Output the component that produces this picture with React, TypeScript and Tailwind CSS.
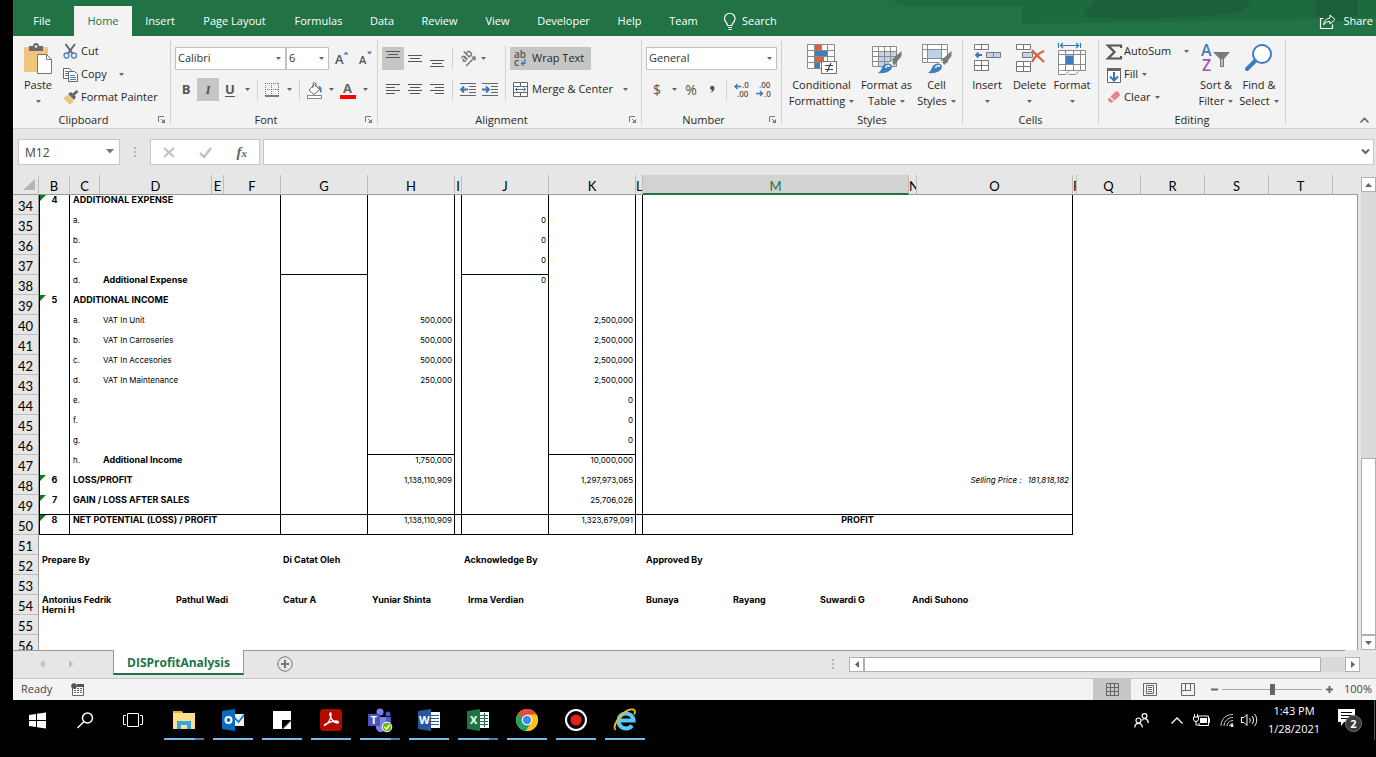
import React from "react";

type Kids = { children?: React.ReactNode };

/* ---------- drawing helpers ---------- */

function Svg({ w, h, children, className = "" }: Kids & { w: number; h: number; className?: string }) {
  return (
    <svg width={w} height={h} viewBox={`0 0 ${w} ${h}`} fill="none" className={`shrink-0 overflow-visible ${className}`} aria-hidden="true">
      {children}
    </svg>
  );
}

const Caret = ({ className = "" }: { className?: string }) => (
  <Svg w={5} h={3} className={className}>
    <path d="M0 0h5L2.500 3z" fill="#666" />
  </Svg>
);

const Launcher = () => (
  <Svg w={8} h={8}>
    <path d="M.5 6V.5H6M3 3l3 3" stroke="#777" />
    <path d="M7 3v4H3z" fill="#777" />
  </Svg>
);

const PasteIcon = () => (
  <Svg w={30} h={32}>
    <rect x="1" y="4" width="24" height="25" rx="1" fill="#eec680" />
    <path d="M6 3h4a3 3 0 0 1 6 0h4v5H6z" fill="#6b6b6b" />
    <circle cx="13" cy="3.500" r="1.300" fill="#f3f3f3" />
    <path d="M14.500 11.500h9l5 5v14h-14z" fill="#fff" stroke="#777" />
    <path d="M23.500 11.500v5h5" stroke="#777" />
  </Svg>
);

const CutIcon = () => (
  <Svg w={15} h={15}>
    <path d="M2.500 0 9.500 9.500M12 0 5 9.500" stroke="#666" strokeWidth="2" />
    <circle cx="3.500" cy="11.500" r="2.500" stroke="#4a80bd" strokeWidth="1.300" />
    <circle cx="11" cy="11.500" r="2.500" stroke="#4a80bd" strokeWidth="1.300" />
  </Svg>
);

const CopyIcon = () => (
  <Svg w={15} h={15}>
    <path d="M.5 1.500h6l2 2v8h-8z" fill="#fff" stroke="#666" />
    <path d="M2 4.500h3M2 6.500h3M2 8.500h3" stroke="#4a80bd" />
    <path d="M5.500 4.500h6l3 3v7h-9z" fill="#fff" stroke="#666" />
    <path d="M7 8.500h5M7 10.500h6M7 12.500h6" stroke="#4a80bd" />
  </Svg>
);

const PainterIcon = () => (
  <Svg w={16} h={15}>
    <path d="M0 8l5-3 6 6-4 4z" fill="#eec680" />
    <path d="M5 4l3-2 5 5-2 3z" fill="#666" />
    <path d="M10 5l4.500-4" stroke="#666" strokeWidth="3" />
  </Svg>
);

function FontSizeIcon({ up }: { up: boolean }) {
  return (
    <Svg w={16} h={18}>
      <text x="0" y="14" fontFamily="Open Sans, sans-serif" fontWeight="600" fontSize={up ? 13 : 11} fill="#555">A</text>
      <path d={up ? "M8.500 4.500h5L11 1.500z" : "M8 1.500h5l-2.500 3z"} fill="#4a80bd" />
    </Svg>
  );
}

const BorderIcon = () => (
  <Svg w={14} h={14}>
    <path d="M.5 0v13M13.500 0v13M6.500 0v13M0 .5h14M0 6.500h14" stroke="#777" strokeDasharray="1 1" />
    <path d="M0 13h14" stroke="#555" strokeWidth="1.500" />
  </Svg>
);

const BucketIcon = () => (
  <Svg w={17} h={18}>
    <path d="M3 9l5.500-5.500 5 5L8 13.500z" fill="#fff" stroke="#666" />
    <path d="M7 7V3a1.500 1.500 0 0 1 3 0v3" stroke="#666" />
    <path d="M12 5c4 0 4 3 3.500 7-2-1-1.500-3-3.500-7z" fill="#4a80bd" />
    <rect x="1.500" y="14.500" width="14" height="3" fill="#fff" stroke="#888" />
  </Svg>
);

const FontColorIcon = () => (
  <Svg w={16} h={18}>
    <text x="3" y="12" fontFamily="Open Sans, sans-serif" fontWeight="700" fontSize="13" fill="#666">A</text>
    <rect y="14" width="16" height="4" fill="#f00" />
  </Svg>
);

/* Horizontal strokes given as [x1, x2, y]. */
function Lines({ rows, w = 14, h = 16 }: { rows: number[][]; w?: number; h?: number }) {
  return (
    <Svg w={w} h={h}>
      <path d={rows.map(([a, b, y]) => `M${a} ${y + 0.5}H${b}`).join("")} stroke="#555" />
    </Svg>
  );
}

const OrientIcon = () => (
  <Svg w={17} h={18}>
    <text x="0" y="0" transform="translate(4 13) rotate(-45)" fontFamily="Open Sans, sans-serif" fontWeight="600" fontSize="11" fill="#666">ab</text>
    <path d="M6 16 15 7M11.500 7H15v3.500" stroke="#666" strokeWidth="1.200" />
  </Svg>
);

function IndentIcon({ right }: { right: boolean }) {
  return (
    <Svg w={17} h={14}>
      <path d="M0 .5h16M9 3.500h7M9 6.500h7M9 9.500h7M0 12.500h16" stroke="#666" />
      <path d={right ? "M0 6.500h6M4 3.500l3 3-3 3" : "M1.500 6.500H8M4 3.500l-3 3 3 3"} stroke="#3a74b5" strokeWidth="1.800" />
    </Svg>
  );
}

const WrapIcon = () => (
  <Svg w={14} h={18}>
    <g fontFamily="Open Sans, sans-serif" fontWeight="600" fontSize="10" fill="#555">
      <text x="0" y="8">ab</text>
      <text x="0" y="16">c</text>
    </g>
    <path d="M11 9v4.500H7.500M9.500 11.500l-2 2 2 2" stroke="#3a74b5" strokeWidth="1.200" />
  </Svg>
);

const MergeIcon = () => (
  <Svg w={15} h={15}>
    <path d="M.5.5h14v14H.5zM.5 4.500h14M.5 10.500h14M7.500.5v4M7.500 10.500v4" fill="#fff" stroke="#666" />
    <path d="M2.500 7.500h10M4.500 5.500l-2 2 2 2M10.500 5.500l2 2-2 2" stroke="#3a74b5" />
  </Svg>
);

function DecimalIcon({ more }: { more: boolean }) {
  return (
    <Svg w={15} h={16}>
      <g fontFamily="Open Sans, sans-serif" fontWeight="600" fontSize="8" fill="#555">
        <text x={more ? 8 : 3} y="6">{more ? ".0" : ".00"}</text>
        <text x={more ? 3 : 8} y="15">{more ? ".00" : ".0"}</text>
      </g>
      <path d={more ? "M1 4.500h6M3.500 2 1 4.500 3.500 7" : "M0 11.500h6M4 9l2.500 2.500L4 14"} stroke="#3a74b5" strokeWidth="1.300" />
    </Svg>
  );
}

const ConditionalIcon = () => (
  <Svg w={32} h={32}>
    <path d="M1.500 1.500h27v24h-27z" fill="#fff" />
    <path d="M9 2h6v6H9zM9 14h9v5H9z" fill="#d8623f" />
    <path d="M9 8h12v5H9zM9 20h5v5H9z" fill="#3f7cbd" />
    <path d="M1.500 1.500h27v24h-27zM1.500 7.500h27M1.500 13.500h27M1.500 19.500h27M8.500 1.500v24M15.500 1.500v6M21.500 1.500v24" stroke="#8a8a8a" />
    <rect x="15.500" y="18.500" width="15" height="12" fill="#fff" stroke="#777" />
    <path d="M19 22.500h8M19 26.500h8M25 20l-4 9" stroke="#444" strokeWidth="1.200" />
  </Svg>
);

const Brush = () => (
  <>
    <path d="M29.500 8v5l-7 9-4-4z" fill="#7a7a7a" />
    <path d="M21 17l-4 3 3 3z" fill="#fff" />
    <path d="M20 23c0 5-6 8-14 7 5-3 3-8 8-9 3-1 5 0 6 2z" fill="#3f7cbd" />
    <path d="M13.500 25c1-3 4-3 4-1" stroke="#fff" strokeWidth="1.500" />
  </>
);

const TableIcon = () => (
  <Svg w={30} h={32}>
    <path d="M.5 3.500h24v20H.5z" fill="#fff" />
    <path d="M7 9h18v15H7z" fill="#c3d5ea" />
    <path d="M.5 3.500h24v20H.5zM.5 8.500h24M.5 13.500h24M.5 18.500h24M6.500 3.500v20M12.500 3.500v20M18.500 3.500v20" stroke="#8a8a8a" />
    <Brush />
  </Svg>
);

const CellStylesIcon = () => (
  <Svg w={30} h={32}>
    <path d="M.5 1.500h26v19H.5z" fill="#fff" />
    <path d="M6 7h14v9H6z" fill="#bcd1ea" />
    <path d="M.5 1.500h25v18H.5zM.5 6.500h25M.5 15.500h25M5.500 1.500v18M19.500 1.500v18" stroke="#8a8a8a" />
    <Brush />
  </Svg>
);

const InsertIcon = () => (
  <Svg w={28} h={32}>
    <path d="M1.500 1.500h14v5h-14zM8.500 1.500v5M1.500 17.500h14v10h-14zM8.500 17.500v10M1.500 22.500h14" fill="#fff" stroke="#777" />
    <path d="M13.500 9.500h14v5h-14zM20.500 9.500v5" fill="#c3d5ea" stroke="#777" />
    <path d="M3 12h6M5.500 9.500 3 12l2.500 2.500" stroke="#3a74b5" strokeWidth="1.800" />
  </Svg>
);

const DeleteIcon = () => (
  <Svg w={30} h={32}>
    <path d="M1.500 1.500h14v5h-14zM8.500 1.500v5M1.500 18.500h14v10h-14zM8.500 18.500v10M1.500 23.500h14" fill="#fff" stroke="#777" />
    <path d="M7.500 9.500h10v5h-10z" fill="#c3d5ea" stroke="#777" />
    <path d="M17 7c3 4 8 8 12 12M29 8c-5 2-10 7-12 11" stroke="#d8623f" strokeWidth="2.200" />
  </Svg>
);

const FormatIcon = () => (
  <Svg w={30} h={32}>
    <path d="M1.500 0v5M23.500 0v5M3 2.500h19M6 0 3.500 2.500 6 5M19 0l2.500 2.500L19 5" stroke="#3a74b5" strokeWidth="1.200" />
    <path d="M1.500 7.500h27v20h-27z" fill="#fff" />
    <path d="M8.500 12.500h8v9h-8z" fill="#3f7cbd" />
    <path d="M1.500 7.500h27v20h-27zM1.500 11.500h27M1.500 21.500h27M8.500 7.500v20M16.500 7.500v20M23.500 7.500v20" stroke="#8a8a8a" />
    <path d="M1.500 27.500v4h7l3-3M11.500 31.500h7l3-3" fill="#fff" stroke="#8a8a8a" />
  </Svg>
);

const SigmaIcon = () => (
  <Svg w={16} h={16}>
    <path d="M15 4V1.500H2L8.500 8 2 14.500h13V12" stroke="#555" strokeWidth="2.200" />
  </Svg>
);

const FillIcon = () => (
  <Svg w={16} h={16}>
    <path d="M1.500 1.500h13v14h-13z" fill="#fff" stroke="#666" />
    <path d="M1 1h14v3H1z" fill="#666" />
    <path d="M8 5v8M4 9.500l4 4 4-4" stroke="#3a74b5" strokeWidth="2" />
  </Svg>
);

const EraserIcon = () => (
  <Svg w={16} h={15}>
    <path d="M8.500 2.500 11 1l3 3-.5 2-5 4.500-4-4z" fill="#ec8093" />
    <path d="M3.500 7.500l4 4L5 13 1.500 10z" fill="#ec8093" />
  </Svg>
);

const SortIcon = () => (
  <Svg w={30} h={32}>
    <g fontFamily="Open Sans, sans-serif" fontWeight="600" fontSize="16">
      <text x="0" y="13" fill="#3f7cbd">A</text>
      <text x="1" y="28" fill="#9a55b5">Z</text>
    </g>
    <path d="M12 9h17l-6 7v8h-4v-8z" fill="#7a7a7a" />
    <path d="M20.500 16h1v7h-1z" fill="#fff" />
  </Svg>
);

const FindIcon = () => (
  <Svg w={28} h={32}>
    <circle cx="17" cy="11" r="9" fill="#fff" stroke="#3f7cbd" strokeWidth="2" />
    <path d="M10 18 2 26" stroke="#3f7cbd" strokeWidth="4" strokeLinecap="round" />
  </Svg>
);

/* ---------- ribbon ---------- */

const tabs: [string, string][] = [
  ["File", "w-[58px] mr-[3px]"],
  ["Home", "w-[58px]"],
  ["Insert", "w-[56px]"],
  ["Page Layout", "w-[93px]"],
  ["Formulas", "w-[75px]"],
  ["Data", "w-[52px]"],
  ["Review", "w-[63px]"],
  ["View", "w-[53px]"],
  ["Developer", "w-[79px]"],
  ["Help", "w-[53px]"],
  ["Team", "w-[55px]"],
];

function TabBar() {
  return (
    <header className="relative flex h-9 shrink-0 items-end overflow-hidden bg-[#217346] text-white">
      <svg className="absolute top-0 right-0" width="486" height="36" viewBox="0 0 486 36" aria-hidden="true">
        <path d="M0 0h486v6H16z" fill="#1e6a40" />
        <path d="M132 6h354v12L132 24z" fill="#1e6a40" />
        <path d="M205 0c-2 8-16 12-8 17 40 4 90 0 132-2 20-1 30-6 32-15z" fill="#1b603a" />
        <path d="M428 0c-8 8-2 16 6 19 14 4 24 2 34-4V0z" fill="#1b603a" />
      </svg>
      <nav className="relative flex h-[30px]">
        {tabs.map(([name, width]) => (
          <button key={name} className={`h-full ${width} ${name === "Home" ? "bg-[#f3f3f3] text-[#217346]" : ""}`}>
            {name}
          </button>
        ))}
      </nav>
      <button className="relative ml-3 flex h-[30px] items-center gap-[5px]">
        <Svg w={14} h={17}>
          <path d="M4.500 12.500c0-3-3-3.500-3-7a5.200 5.200 0 0 1 10.500 0c0 3.500-3 4-3 7zM5 14.500h4M5.500 16.500h3" stroke="#fff" strokeWidth="1.200" />
        </Svg>
        Search
      </button>
      <button className="relative mr-[3px] ml-auto flex h-[30px] items-center gap-[7px]">
        <Svg w={16} h={15}>
          <path d="M3.500 4.500h-3v10h12v-4" stroke="#fff" strokeWidth="1.200" />
          <path d="M10 1l5 4.500L10 10V7.500C7 7.500 5 8.500 3.500 11c.5-4 2.500-6.500 6.500-7z" stroke="#fff" />
        </Svg>
        Share
      </button>
    </header>
  );
}

function Group({ label, width, launcher, children }: Kids & { label: string; width: string; launcher?: boolean }) {
  return (
    <section className={`flex h-[84px] shrink-0 flex-col border-r border-[#d0d0d0] ${width}`}>
      <div className="flex h-[72px] shrink-0">{children}</div>
      <div className="flex h-4 shrink-0 items-center text-center">
        <h2 className="flex-1">{label}</h2>
        {launcher && (
          <button aria-label={`${label} settings`} className="flex w-4 justify-end pr-1">
            <Launcher />
          </button>
        )}
      </div>
    </section>
  );
}

function BigButton({ icon, lines, width }: { icon: React.ReactNode; lines: string[]; width: string }) {
  return (
    <button className={`flex shrink-0 flex-col items-center pt-[3px] leading-4 whitespace-nowrap ${width}`}>
      <span className="mb-[2px]">{icon}</span>
      <span>{lines[0]}</span>
      <span className="flex h-4 items-center gap-1">
        {lines[1]}
        <Caret />
      </span>
    </button>
  );
}

function SmallButton({ icon, label, caret = "" }: { icon: React.ReactNode; label: string; caret?: string }) {
  return (
    <button className="flex h-[23px] items-center whitespace-nowrap">
      <span className="flex w-[18px]">{icon}</span>
      {label}
      {caret && <Caret className={caret} />}
    </button>
  );
}

function Tool({ label, width = "w-[22px]", active, children }: Kids & { label: string; width?: string; active?: boolean }) {
  return (
    <button aria-label={label} className={`flex h-[23px] shrink-0 items-center justify-center ${width} ${active ? "bg-[#c6c6c6]" : ""}`}>
      {children}
    </button>
  );
}

const Bar = () => <span className="h-[21px] w-px shrink-0 bg-[#d0d0d0]" />;

function Picker({ label, value, width }: { label: string; value: string; width: string }) {
  return (
    <label className={`relative block h-[23px] ${width}`}>
      <select aria-label={label} className="h-full w-full appearance-none border border-[#c0c0c0] bg-white pl-[2px] text-[#333]">
        <option>{value}</option>
      </select>
      <Caret className="pointer-events-none absolute top-[10px] right-[5px]" />
    </label>
  );
}

function Ribbon() {
  return (
    <div className="flex h-[93px] shrink-0 border-b border-[#d0d0d0] bg-[#f3f3f3] pt-1">
      <Group label="Clipboard" width="w-[158px]" launcher>
        <BigButton icon={<PasteIcon />} lines={["Paste"]} width="w-[50px]" />
        <div className="flex flex-col">
          <SmallButton icon={<CutIcon />} label="Cut" />
          <SmallButton icon={<CopyIcon />} label="Copy" caret="ml-3" />
          <SmallButton icon={<PainterIcon />} label="Format Painter" />
        </div>
      </Group>

      <Group label="Font" width="w-[207px]" launcher>
        <div className="flex flex-col gap-2 pt-[7px] pl-1">
          <div className="flex">
            <Picker label="Font name" value="Calibri" width="w-[111px]" />
            <Picker label="Font size" value="6" width="w-[43px]" />
            <Tool label="Increase font size" width="w-[28px]"><FontSizeIcon up /></Tool>
            <Tool label="Decrease font size" width="w-5"><FontSizeIcon up={false} /></Tool>
          </div>
          <div className="flex items-center text-[13px] font-bold text-[#555]">
            <Tool label="Bold">B</Tool>
            <Tool label="Italic" active><span className="font-['Liberation_Serif',serif] italic">I</span></Tool>
            <Tool label="Underline"><span className="border-b border-[#555] leading-[13px]">U</span></Tool>
            <Tool label="Underline options" width="w-3"><Caret /></Tool>
            <span className="w-1" />
            <Bar />
            <span className="w-[3px]" />
            <Tool label="Borders"><BorderIcon /></Tool>
            <Tool label="Border options" width="w-3"><Caret /></Tool>
            <span className="w-1" />
            <Bar />
            <span className="w-[3px]" />
            <Tool label="Fill color"><BucketIcon /></Tool>
            <Tool label="Fill color options" width="w-3"><Caret /></Tool>
            <Tool label="Font color"><FontColorIcon /></Tool>
            <Tool label="Font color options" width="w-3"><Caret /></Tool>
          </div>
        </div>
      </Group>

      <Group label="Alignment" width="w-[264px]" launcher>
        <div className="flex flex-col gap-2 pt-[7px] pl-1">
          <div className="flex items-center">
            <Tool label="Top align" active><Lines rows={[[0, 14, 0], [2, 12, 3], [0, 14, 6]]} /></Tool>
            <Tool label="Middle align"><Lines rows={[[0, 14, 4], [2, 12, 7], [0, 14, 10]]} /></Tool>
            <Tool label="Bottom align"><Lines rows={[[0, 14, 9], [2, 12, 12], [0, 14, 15]]} /></Tool>
            <span className="w-1" />
            <Bar />
            <span className="w-1" />
            <Tool label="Orientation"><OrientIcon /></Tool>
            <Tool label="Orientation options" width="w-2"><Caret /></Tool>
          </div>
          <div className="flex items-center">
            <Tool label="Align left"><Lines h={11} rows={[[0, 14, 0], [0, 9, 3], [0, 14, 6], [0, 9, 9]]} /></Tool>
            <Tool label="Align center"><Lines h={11} rows={[[0, 14, 0], [2, 12, 3], [0, 14, 6], [2, 12, 9]]} /></Tool>
            <Tool label="Align right"><Lines h={11} rows={[[0, 14, 0], [5, 14, 3], [0, 14, 6], [5, 14, 9]]} /></Tool>
            <span className="w-1" />
            <Bar />
            <span className="w-1" />
            <Tool label="Decrease indent"><IndentIcon right={false} /></Tool>
            <Tool label="Increase indent"><IndentIcon right /></Tool>
          </div>
        </div>
        <span className="mt-[6px] ml-1 h-[54px] w-px bg-[#d0d0d0]" />
        <div className="flex flex-col gap-2 pt-[7px] pl-1">
          <button className="flex h-[23px] w-[81px] items-center gap-1 bg-[#c6c6c6] pl-1 whitespace-nowrap">
            <WrapIcon />
            Wrap Text
          </button>
          <button className="flex h-[23px] items-center gap-1 pl-[3px] whitespace-nowrap">
            <MergeIcon />
            Merge &amp; Center
            <Caret className="ml-[6px]" />
          </button>
        </div>
      </Group>

      <Group label="Number" width="w-[140px]" launcher>
        <div className="flex flex-col gap-2 pt-[7px] pl-1">
          <Picker label="Number format" value="General" width="w-[131px]" />
          <div className="flex items-center text-[14px] text-[#555]">
            <Tool label="Currency">$</Tool>
            <Tool label="Currency options" width="w-3"><Caret /></Tool>
            <Tool label="Percent">%</Tool>
            <Tool label="Comma style" width="w-5">
              <Svg w={5} h={8}><path d="M0 2a2 2 0 0 1 4.500 0c0 2-1.500 4-4 5C1.500 6 2 5 2 4 1 4 0 3 0 2z" fill="#555" /></Svg>
            </Tool>
            <span className="w-1" />
            <Bar />
            <span className="w-[3px]" />
            <Tool label="Increase decimal"><DecimalIcon more /></Tool>
            <Tool label="Decrease decimal"><DecimalIcon more={false} /></Tool>
          </div>
        </div>
      </Group>

      <Group label="Styles" width="w-[181px]">
        <span className="w-[3px]" />
        <BigButton icon={<ConditionalIcon />} lines={["Conditional", "Formatting"]} width="w-[73px]" />
        <BigButton icon={<TableIcon />} lines={["Format as", "Table"]} width="w-[57px]" />
        <BigButton icon={<CellStylesIcon />} lines={["Cell", "Styles"]} width="w-[43px]" />
      </Group>

      <Group label="Cells" width="w-[136px]">
        <span className="w-[3px]" />
        <BigButton icon={<InsertIcon />} lines={["Insert"]} width="w-[42px]" />
        <BigButton icon={<DeleteIcon />} lines={["Delete"]} width="w-[43px]" />
        <BigButton icon={<FormatIcon />} lines={["Format"]} width="w-[42px]" />
      </Group>

      <Group label="Editing" width="w-[187px]">
        <div className="flex w-[96px] flex-col pl-[7px]">
          <SmallButton icon={<SigmaIcon />} label="AutoSum" caret="ml-[13px]" />
          <SmallButton icon={<FillIcon />} label="Fill" caret="ml-1" />
          <SmallButton icon={<EraserIcon />} label="Clear" caret="ml-1" />
        </div>
        <BigButton icon={<SortIcon />} lines={["Sort &", "Filter"]} width="w-[42px]" />
        <BigButton icon={<FindIcon />} lines={["Find &", "Select"]} width="w-[44px]" />
      </Group>

      <button aria-label="Collapse ribbon" className="mt-auto mr-[7px] mb-[5px] ml-auto">
        <Svg w={9} h={6}><path d="M.5 5.500l4-4 4 4" stroke="#666" strokeWidth="1.600" /></Svg>
      </button>
    </div>
  );
}

/* ---------- formula bar ---------- */

const Dots = () => (
  <Svg w={2} h={11}>
    <path d="M0 0h2v2H0zM0 4h2v2H0zM0 8h2v2H0z" fill="#b0b0b0" />
  </Svg>
);

function FormulaBar() {
  return (
    <div className="flex h-[46px] shrink-0 items-start pt-[10px] pr-[2px] pl-[5px]">
      <label className="relative flex w-[102px]">
        <input aria-label="Name box" defaultValue="M12" className="h-[26px] w-full border border-[#c6c6c6] bg-white pl-[6px] text-xs text-[#444]" />
        <Svg w={8} h={5} className="absolute top-[10px] right-[6px]"><path d="M0 0h8L4 4.500z" fill="#777" /></Svg>
      </label>
      <span className="flex h-[26px] w-[30px] items-center justify-center"><Dots /></span>
      <div className="flex h-[26px] w-[110px] items-center justify-around border border-[#c6c6c6] bg-white">
        <button aria-label="Cancel"><Svg w={12} h={11}><path d="M1 1l10 9M11 1L1 10" stroke="#c0c0c0" strokeWidth="2" /></Svg></button>
        <button aria-label="Enter"><Svg w={13} h={11}><path d="M1 6l4 4 7-9" stroke="#c0c0c0" strokeWidth="2.400" /></Svg></button>
        <button className="font-['Liberation_Serif',serif] text-[15px] font-bold text-[#666] italic">f<span className="text-[11px]">x</span></button>
      </div>
      <label className="relative ml-[3px] flex flex-1">
        <input aria-label="Formula" className="h-[26px] w-full border border-[#c6c6c6] bg-white px-2" />
        <Svg w={9} h={6} className="absolute top-[10px] right-1"><path d="M1 .5l3.500 3.500L8 .5" stroke="#666" strokeWidth="2" /></Svg>
      </label>
    </div>
  );
}

/* ---------- worksheet ---------- */

const columns: [string, string][] = [
  ["B", "w-[31px]"], ["C", "w-[30px]"], ["D", "w-[112px]"], ["E", "w-[12px]"], ["F", "w-[57px]"],
  ["G", "w-[87px]"], ["H", "w-[87px]"], ["I", "w-[7px]"], ["J", "w-[87px]"], ["K", "w-[87px]"],
  ["L", "w-[7px]"], ["M", "w-[266px]"], ["N", "w-[8px]"], ["O", "w-[156px]"], ["P", "w-[4px]"],
  ["Q", "w-[64px]"], ["R", "w-[64px]"], ["S", "w-[64px]"], ["T", "w-[64px]"],
];

type Row = { n: number; b?: string; c?: string; title?: string; d?: string; bold?: boolean; h?: string; j?: string; k?: string; m?: string; note?: string };

const rows: Row[] = [
  { n: 34, b: "4", title: "ADDITIONAL EXPENSE" },
  { n: 35, c: "a.", j: "0" },
  { n: 36, c: "b.", j: "0" },
  { n: 37, c: "c.", j: "0" },
  { n: 38, c: "d.", d: "Additional Expense", bold: true, j: "0" },
  { n: 39, b: "5", title: "ADDITIONAL INCOME" },
  { n: 40, c: "a.", d: "VAT In Unit", h: "500,000", k: "2,500,000" },
  { n: 41, c: "b.", d: "VAT In Carroseries", h: "500,000", k: "2,500,000" },
  { n: 42, c: "c.", d: "VAT In Accesories", h: "500,000", k: "2,500,000" },
  { n: 43, c: "d.", d: "VAT In Maintenance", h: "250,000", k: "2,500,000" },
  { n: 44, c: "e.", k: "0" },
  { n: 45, c: "f.", k: "0" },
  { n: 46, c: "g.", k: "0" },
  { n: 47, c: "h.", d: "Additional Income", bold: true, h: "1,750,000", k: "10,000,000" },
  { n: 48, b: "6", title: "LOSS/PROFIT", h: "1,138,110,909", k: "1,297,973,065", note: "181,818,182" },
  { n: 49, b: "7", title: "GAIN / LOSS AFTER SALES", k: "25,706,026" },
  { n: 50, b: "8", title: "NET POTENTIAL (LOSS) / PROFIT", h: "1,138,110,909", k: "1,323,679,091", m: "PROFIT" },
];

function RowHead({ n }: { n: number }) {
  return (
    <th scope="row" className="h-5 border-r border-b border-r-[#999] border-b-[#bdbdbd] bg-[#e6e6e6] p-0 align-bottom font-['Lato',sans-serif] text-[13px] leading-4 font-normal text-black">
      {n}
    </th>
  );
}

function Cell({ right = true, bottom = false, span = 1, className = "", children }: Kids & { right?: boolean; bottom?: boolean; span?: number; className?: string }) {
  return (
    <td colSpan={span} className={`h-5 p-0 align-top ${right ? "border-r border-r-black" : ""} ${bottom ? "border-b border-b-black" : ""} ${className}`}>
      {children}
    </td>
  );
}

function DataRow({ r }: { r: Row }) {
  const rule = r.n >= 49;
  const strong = "text-[9px] font-bold";
  return (
    <tr>
      <RowHead n={r.n} />
      <Cell bottom={rule} className={`relative border-l border-l-black text-center ${strong}`}>
        {r.b}
        {r.b && <Svg w={6} h={6} className="absolute top-0 left-0"><path d="M0 0h6L0 6z" fill="#0a7a1c" /></Svg>}
      </Cell>
      {r.title ? (
        <Cell bottom={rule} span={4} className={`pl-[3px] ${strong}`}>{r.title}</Cell>
      ) : (
        <>
          <Cell right={false} className="pl-[3px]">{r.c}</Cell>
          <Cell span={3} className={`pl-[3px] ${r.bold ? strong : ""}`}>{r.d}</Cell>
        </>
      )}
      <Cell bottom={rule || r.n === 37} />
      <Cell bottom={rule || r.n === 46} className="pr-[2px] text-right">{r.h}</Cell>
      <Cell bottom={rule} />
      <Cell bottom={rule || r.n === 37} className="pr-[2px] text-right">{r.j}</Cell>
      <Cell bottom={rule || r.n === 46} className="pr-[2px] text-right">{r.k}</Cell>
      <Cell bottom={rule} />
      <Cell bottom={rule} span={3} className={r.note ? "pr-[3px] text-right italic" : `text-center ${strong}`}>
        {r.m}
        {r.note && <span className="inline-flex gap-[6px]"><span>Selling Price :</span><span>{r.note}</span></span>}
      </Cell>
      <td colSpan={5} />
      <td className="border-r border-[#999]" />
    </tr>
  );
}

function PlainRow({ n, left, g, h, j, m, o }: { n: number; left?: React.ReactNode; g?: string; h?: string; j?: React.ReactNode; m?: React.ReactNode; o?: string }) {
  return (
    <tr className="text-[9px] font-bold">
      <RowHead n={n} />
      <Cell right={false} span={5} className="pl-[3px]">{left}</Cell>
      <Cell right={false} className="pl-[2px]">{g}</Cell>
      <Cell right={false} className="pl-1">{h}</Cell>
      <Cell right={false} />
      <Cell right={false} className="pl-[2px]">{j}</Cell>
      <Cell right={false} />
      <Cell right={false} />
      <Cell right={false} className="pl-[3px]">{m}</Cell>
      <Cell right={false} span={3} className="pl-[3px]">{o}</Cell>
      <td colSpan={4} />
      <td className="border-r border-[#999]" />
    </tr>
  );
}

function Sheet() {
  return (
    <div className="min-w-0 flex-1 overflow-hidden">
      <table className="w-full table-fixed border-separate border-spacing-0 bg-white font-['Inter',sans-serif] text-[8px] leading-[10px] whitespace-nowrap text-black">
        <colgroup>
          <col className="w-[26px]" />
          {columns.map(([name, width]) => <col key={name} className={width} />)}
          <col />
        </colgroup>
        <thead className="font-['Lato',sans-serif] text-[13px] leading-4">
          <tr>
            <th aria-label="Select all" className="h-5 border-r border-b border-r-[#bdbdbd] border-b-[#999] bg-[#e6e6e6] p-0">
              <Svg w={12} h={11} className="ml-[10px]"><path d="M12 0v11H0z" fill="#b5b5b5" /></Svg>
            </th>
            {columns.map(([name]) => (
              <th
                key={name}
                scope="col"
                className={`h-5 overflow-hidden border-r border-r-[#bdbdbd] p-0 align-bottom font-normal ${
                  name === "M" ? "border-b-2 border-b-[#217346] bg-[#d2d2d2] leading-[14px] text-[#217346]" : "border-b border-b-[#999] bg-[#e6e6e6]"
                }`}
              >
                {name}
              </th>
            ))}
            <th aria-label="U" className="h-5 border-b border-b-[#999] bg-[#e6e6e6] p-0" />
          </tr>
        </thead>
        <tbody>
          {rows.map((r) => <DataRow key={r.n} r={r} />)}
          <PlainRow n={51} />
          <PlainRow n={52} left="Prepare By" g="Di Catat Oleh" j="Acknowledge By" m="Approved By" />
          <PlainRow n={53} />
          <PlainRow
            n={54}
            left={<div className="flex"><span className="w-[134px]">Antonius Fedrik<br />Herni H</span><span>Pathul Wadi</span></div>}
            g="Catur A"
            h="Yuniar Shinta"
            j={<span className="pl-1">Irma Verdian</span>}
            m={<div className="flex"><span className="w-[87px]">Bunaya</span><span className="w-[87px]">Rayang</span><span>Suwardi G</span></div>}
            o="Andi Suhono"
          />
          <PlainRow n={55} />
          <PlainRow n={56} />
        </tbody>
      </table>
    </div>
  );
}

const scrollBox = "flex h-[15px] w-[15px] shrink-0 items-center justify-center border border-[#b0b0b0] bg-white";

function VerticalScroll() {
  return (
    <div className="flex w-[18px] shrink-0 flex-col pt-[2px] pl-[3px]">
      <button aria-label="Scroll up" className={scrollBox}><Svg w={7} h={4}><path d="M0 4h7L3.500 0z" fill="#666" /></Svg></button>
      <div className="flex w-[15px] flex-1 flex-col justify-end bg-[#dadada]">
        <div className="h-[40%] border border-[#b0b0b0] bg-white" />
      </div>
      <button aria-label="Scroll down" className={scrollBox}><Svg w={7} h={4}><path d="M0 0h7L3.500 4z" fill="#666" /></Svg></button>
    </div>
  );
}

function SheetTabs() {
  return (
    <div className="flex h-7 shrink-0">
      <div className="flex flex-1 border-t border-[#999]">
        <div className="flex w-[100px] items-start gap-6 pt-[9px] pl-[27px]">
          <button aria-label="Previous sheet"><Svg w={5} h={8}><path d="M4.500 0v8L0 4z" fill="#c0c0c0" /></Svg></button>
          <button aria-label="Next sheet"><Svg w={5} h={8}><path d="M0 0v8l4.500-4z" fill="#c0c0c0" /></Svg></button>
        </div>
        <button className="-mt-px h-[25px] w-[131px] border-x border-b-2 border-x-[#999] border-b-[#217346] bg-white pt-[3px] text-xs font-bold text-[#217346]">
          DISProfitAnalysis
        </button>
        <button aria-label="New sheet" className="ml-[33px] h-[26px]">
          <Svg w={16} h={16}>
            <circle cx="8" cy="8" r="7.200" stroke="#777" />
            <path d="M8 4v8M4 8h8" stroke="#777" strokeWidth="2" />
          </Svg>
        </button>
        <div className="mt-[6px] ml-auto flex h-[15px] w-[513px] items-center">
          <Dots />
          <button aria-label="Scroll left" className={`ml-[15px] ${scrollBox}`}><Svg w={4} h={7}><path d="M4 0v7L0 3.500z" fill="#666" /></Svg></button>
          <div className="flex h-[15px] flex-1 bg-[#dadada]">
            <div className="w-[95%] border border-[#b0b0b0] bg-white" />
          </div>
        </div>
      </div>
      <button aria-label="Scroll right" className={`mt-[7px] mr-4 ${scrollBox}`}><Svg w={4} h={7}><path d="M0 0v7l4-3.500z" fill="#666" /></Svg></button>
    </div>
  );
}

function StatusBar() {
  const view = "flex h-full w-[38px] items-center justify-center";
  return (
    <footer className="flex h-[22px] shrink-0 items-center border-t border-[#c6c6c6] bg-[#f3f3f3] pr-1 pb-px pl-2 text-[#444]">
      <span>Ready</span>
      <button aria-label="Record macro" className="ml-[19px]">
        <Svg w={13} h={13}>
          <path d="M1.500 5v7.500h11v-10H6" fill="#fff" stroke="#666" />
          <path d="M6 1h7v3H6z" fill="#555" />
          <path d="M3 7.500h8M3 9.500h8M3 5.500h8" stroke="#666" strokeDasharray="2 1" />
          <circle cx="3" cy="3" r="2.800" fill="#555" />
        </Svg>
      </button>
      <div className="-mb-px ml-auto flex h-[21px]">
        <button aria-label="Normal view" className={`${view} bg-[#c6c6c6]`}>
          <Svg w={13} h={13}><path d="M.5.5h12v12H.5zM.5 4.500h12M.5 8.500h12M4.500.5v12M8.500.5v12" stroke="#666" /></Svg>
        </button>
        <button aria-label="Page layout view" className={view}>
          <Svg w={14} h={13}><path d="M.5.5h13v12H.5zM3.500 2.500h7v8h-7zM5 4.500h4M5 6.500h4M5 8.500h4" stroke="#666" /></Svg>
        </button>
        <button aria-label="Page break view" className={view}>
          <Svg w={14} h={13}><path d="M.5.5h13v12H.5zM4.500.5v7M.5 7.500h9V.5" stroke="#666" /></Svg>
        </button>
      </div>
      <button aria-label="Zoom out" className="ml-1"><Svg w={7} h={7}><path d="M0 3.500h7" stroke="#666" strokeWidth="2" /></Svg></button>
      <input
        type="range"
        aria-label="Zoom"
        min={0}
        max={200}
        defaultValue={100}
        className="mx-1 h-3 w-[100px] appearance-none bg-transparent [&::-webkit-slider-runnable-track]:h-px [&::-webkit-slider-runnable-track]:bg-[#aaa] [&::-webkit-slider-thumb]:-mt-[5px] [&::-webkit-slider-thumb]:h-[11px] [&::-webkit-slider-thumb]:w-[5px] [&::-webkit-slider-thumb]:appearance-none [&::-webkit-slider-thumb]:bg-[#666]"
      />
      <button aria-label="Zoom in"><Svg w={7} h={7}><path d="M0 3.500h7M3.500 0v7" stroke="#666" strokeWidth="2" /></Svg></button>
      <span className="ml-[11px]">100%</span>
    </footer>
  );
}

/* ---------- taskbar ---------- */

const glyph = { fontFamily: "Open Sans, sans-serif", fontWeight: 700, fill: "#fff" };

const apps: { name: string; many?: boolean; icon: React.ReactNode }[] = [
  {
    name: "File Explorer",
    many: true,
    icon: (
      <>
        <path d="M1 3h9l1 2h12v16H1z" fill="#fbdf8d" />
        <path d="M1 3h9v2H1z" fill="#f0b429" />
        <path d="M5 21v-8h14v8h-4v-4H9v4z" fill="#35a8dd" />
      </>
    ),
  },
  {
    name: "Outlook",
    icon: (
      <>
        <path d="M12 6h11v12H12z" fill="#e8f1fa" />
        <path d="M13 9l4.500 5L23 7" stroke="#0a6abf" strokeWidth="1.500" />
        <path d="M1 3l13-2v22L1 21z" fill="#0a6abf" />
        <circle cx="7.500" cy="12" r="3" stroke="#fff" strokeWidth="2" />
      </>
    ),
  },
  {
    name: "Sticky Notes",
    icon: (
      <>
        <path d="M3 3h18v9l-9 9H3z" fill="#fff" />
        <path d="M12 12h9l-9 9z" fill="#000" />
        <path d="M21 13v8h-8z" fill="#fff" />
      </>
    ),
  },
  {
    name: "Acrobat Reader",
    icon: (
      <>
        <rect x="1" y="1" width="22" height="22" rx="4" fill="#b30b00" />
        <path d="M6 17c4-2 6-7 6-11 0-2-2-1-1 1 1 4 3 7 7 8 2 0 2-2-1-2-4 0-7 1-10 3-2 1-2 2-1 1z" stroke="#fff" strokeWidth="1.400" />
      </>
    ),
  },
  {
    name: "Teams",
    many: true,
    icon: (
      <>
        <circle cx="12" cy="4" r="3.500" fill="#7b83eb" />
        <circle cx="20" cy="6" r="2.500" fill="#5059c9" />
        <path d="M8 9h10v9a5 5 0 0 1-10 2z" fill="#7b83eb" />
        <path d="M18 9h5v8a4 4 0 0 1-5 3z" fill="#5059c9" />
        <path d="M0 6h12v12H0z" fill="#4b53bc" />
        <text x="2.500" y="16" fontSize="11" {...glyph}>T</text>
        <circle cx="19" cy="19" r="4.800" fill="#6bb700" stroke="#fff" />
        <path d="M16.500 19l2 2 3-4" stroke="#fff" strokeWidth="1.500" />
      </>
    ),
  },
  {
    name: "Word",
    icon: (
      <>
        <path d="M12 4h11v16H12z" fill="#fff" />
        <path d="M14 7.500h8M14 10.500h8M14 13.500h8M14 16.500h8" stroke="#2b579a" />
        <path d="M1 3l13-2v22L1 21z" fill="#2b579a" />
        <text x="2" y="16" fontSize="11" {...glyph}>W</text>
      </>
    ),
  },
  {
    name: "Excel",
    many: true,
    icon: (
      <>
        <path d="M12 4h11v16H12z" fill="#fff" />
        <path d="M14 7.500h8M14 10.500h8M14 13.500h8M14 16.500h8M18.500 5v14" stroke="#217346" />
        <path d="M1 3l13-2v22L1 21z" fill="#217346" />
        <text x="4" y="16" fontSize="11" {...glyph}>X</text>
      </>
    ),
  },
  {
    name: "Chrome",
    icon: (
      <>
        <circle cx="12" cy="12" r="11" fill="#fbc116" />
        <path d="M12 12 2.500 6.500A11 11 0 0 1 21.500 6.500z" fill="#dd4b3e" />
        <path d="M12 12 2.500 6.500A11 11 0 0 0 11 23l5-8.500z" fill="#1da462" />
        <path d="M12 6.500h9.500A11 11 0 0 1 11 23l5.500-9z" fill="#fbc116" />
        <circle cx="12" cy="12" r="5.300" fill="#fff" />
        <circle cx="12" cy="12" r="4.200" fill="#4285f4" />
      </>
    ),
  },
  {
    name: "Recorder",
    icon: (
      <>
        <circle cx="12" cy="12" r="10" stroke="#fff" strokeWidth="2" />
        <circle cx="12" cy="12" r="5.500" fill="#e8201c" />
      </>
    ),
  },
  {
    name: "Internet Explorer",
    icon: (
      <>
        <path d="M6 12.500h14.500a7.500 7.500 0 1 0-1.500 5" stroke="#5cc8f5" strokeWidth="4" />
        <path d="M2.500 22C-2 17 12 0 20 1.500c2.500.5 2.500 3 1 5" stroke="#f2b91d" strokeWidth="1.800" />
      </>
    ),
  },
];

function Taskbar() {
  return (
    <div className="flex h-[57px] shrink-0 bg-black font-['Open_Sans',sans-serif] text-[11px] text-white">
      <div className="flex h-10 flex-1 items-center">
        <button aria-label="Start" className="flex w-[74px] justify-center">
          <Svg w={17} h={17}><path d="M0 3l7-1v6H0zM8 1.800 17 .5V8H8zM0 9h7v6l-7-1zM8 9h9v7.500L8 15.200z" fill="#fff" /></Svg>
        </button>
        <button aria-label="Search" className="flex w-[22px] justify-center">
          <Svg w={17} h={17}><circle cx="10.500" cy="6" r="5" stroke="#fff" strokeWidth="1.500" /><path d="M7 9.500.5 16" stroke="#fff" strokeWidth="1.500" /></Svg>
        </button>
        <button aria-label="Task view" className="flex w-[68px] justify-center pl-[5px]">
          <Svg w={20} h={14}><path d="M4.500.5h11v13h-11zM3 2.500H.5v9H3M17 2.500h2.500v9H17" stroke="#fff" /></Svg>
        </button>
        <div className="flex gap-[9px]">
          {apps.map((a) => (
            <button key={a.name} aria-label={a.name} className="flex h-10 w-10 flex-col items-center pt-2">
              <Svg w={24} h={24}>{a.icon}</Svg>
              <span className="mt-auto flex h-[2px] w-full bg-[#76b9ed]">
                {a.many && <span className="ml-auto w-[9px] bg-[#4f7ea3]" />}
              </span>
            </button>
          ))}
        </div>
      </div>
      <div className="flex h-10 items-center">
        <button aria-label="People">
          <Svg w={15} h={15}>
            <circle cx="4.500" cy="7.500" r="2.500" stroke="#fff" strokeWidth="1.200" />
            <path d="M.8 14.500c0-5.500 7.500-5.500 7.500 0" stroke="#fff" strokeWidth="1.200" />
            <circle cx="10.500" cy="3" r="2.400" stroke="#fff" strokeWidth="1.200" />
            <path d="M8 7.500c2-3 6-2 6.300 2.500" stroke="#fff" strokeWidth="1.200" />
          </Svg>
        </button>
        <button aria-label="Show hidden icons" className="ml-[22px]">
          <Svg w={12} h={7}><path d="M.5 6.500 6 1l5.500 5.500" stroke="#fff" strokeWidth="1.300" /></Svg>
        </button>
        <Svg w={17} h={12} className="ml-[10px]">
          <path d="M4 3.500V1h11.500v9.500H6V8" transform="translate(0 1)" stroke="#fff" />
          <path d="M7 4h7v5H7zM16 4h1v5h-1z" fill="#fff" />
          <path d="M1.500 0v3M4.500 0v3M.5 3h5v2a2.500 2.500 0 0 1-5 0zM3 7v4h3" fill="#000" stroke="#fff" />
        </Svg>
        <Svg w={14} h={14} className="ml-[10px]">
          <path d="M1 13C1 6 6 1.500 13 1.500M4 13c0-5 4-8.500 9-8.500M7 13c0-3 3-5.500 6-5.500M9.500 13c0-1.500 1.500-2.500 3.500-2.500" stroke="#ccc" />
          <circle cx="12" cy="12.500" r="1.500" fill="#fff" />
        </Svg>
        <Svg w={17} h={14} className="ml-[7px]">
          <path d="M.5 4.500h2.500l3-3v11l-3-3H.500z" stroke="#fff" />
          <path d="M8.500 5c1 1.500 1 3 0 4.500M11 3c2 2.500 2 5.500 0 8M13.500 1c3 3.500 3 8.500 0 12" stroke="#fff" />
        </Svg>
        <div className="flex w-[72px] flex-col text-center leading-[18px]">
          <span>1:43 PM</span>
          <span>1/28/2021</span>
        </div>
        <button aria-label="Notifications, 2 new" className="ml-2">
          <Svg w={24} h={24}>
            <path d="M0 1h17v13H6l-3 4v-4H0z" fill="#fff" />
            <path d="M3 4.500h11M3 7.500h11M3 10.500h7" stroke="#000" />
            <circle cx="15.500" cy="15.500" r="8" fill="#3b3b3b" stroke="#777" />
            <text x="12.300" y="19.500" fontSize="11" {...glyph}>2</text>
          </Svg>
        </button>
        <span className="mr-px ml-3 h-10 w-px bg-[#555]" />
      </div>
    </div>
  );
}

export default function App() {
  return (
    <div className="flex h-screen flex-col overflow-hidden bg-black font-['Open_Sans','Noto_Sans',sans-serif] text-[11px] text-[#262626]">
      <div className="ml-[13px] flex min-h-0 flex-1 flex-col bg-[#e6e6e6]">
        <TabBar />
        <Ribbon />
        <FormulaBar />
        <main className="flex min-h-0 flex-1">
          <Sheet />
          <VerticalScroll />
        </main>
        <SheetTabs />
        <StatusBar />
      </div>
      <Taskbar />
    </div>
  );
}
